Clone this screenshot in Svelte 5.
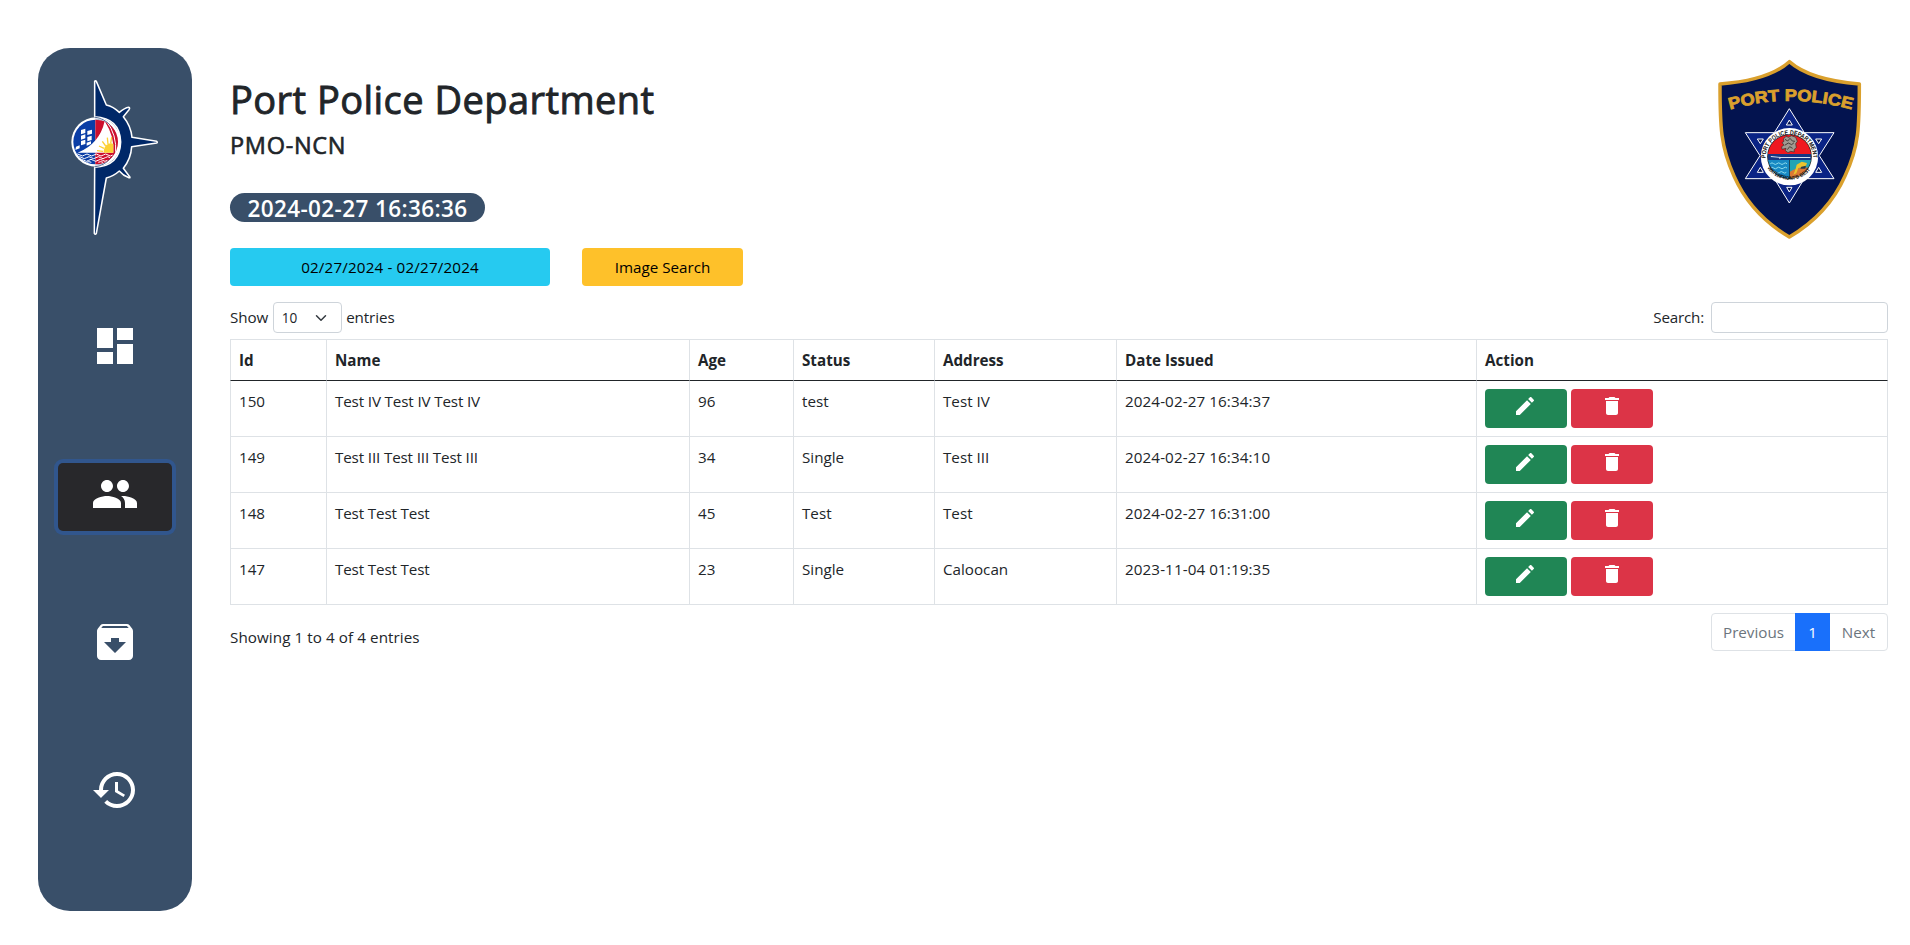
<script>
  const navItems = [
    { name: 'Dashboard', d: 'M3 13h8V3H3v10zm0 8h8v-6H3v6zm10 0h8V11h-8v10zm0-18v6h8V3h-8z' },
    {
      name: 'People',
      active: true,
      d: 'M16 11c1.66 0 2.99-1.34 2.99-3S17.66 5 16 5c-1.66 0-3 1.34-3 3s1.34 3 3 3zm-8 0c1.66 0 2.99-1.34 2.99-3S9.66 5 8 5C6.34 5 5 6.34 5 8s1.34 3 3 3zm0 2c-2.33 0-7 1.17-7 3.5V19h14v-2.500c0-2.330-4.670-3.500-7-3.500zm8 0c-.29 0-.62.02-.97.05 1.160.840 1.970 1.970 1.970 3.450V19h6v-2.500c0-2.330-4.670-3.500-7-3.500z'
    },
    {
      name: 'Archive',
      d: 'M20.540 5.230l-1.390-1.680C18.880 3.210 18.470 3 18 3H6c-.47 0-.88.21-1.160.550L3.460 5.230C3.170 5.570 3 6.020 3 6.500V19c0 1.100.9 2 2 2h14c1.100 0 2-.9 2-2V6.500c0-.48-.17-.93-.46-1.270zM12 17.500L6.500 12H10v-2h4v2h3.500L12 17.500zM5.120 5l.81-1h12l.94 1H5.120z'
    },
    {
      name: 'History',
      d: 'M13 3c-4.970 0-9 4.030-9 9H1l3.890 3.890.070.140L9 12H6c0-3.870 3.130-7 7-7s7 3.130 7 7-3.130 7-7 7c-1.930 0-3.680-.79-4.940-2.060l-1.420 1.420C8.270 19.990 10.510 21 13 21c4.970 0 9-4.030 9-9s-4.030-9-9-9zm-1 5v5l4.280 2.540.720-1.210-3.500-2.080V8H12z'
    }
  ];

  const columns = ['Id', 'Name', 'Age', 'Status', 'Address', 'Date Issued', 'Action'];

  const rows = [
    ['150', 'Test IV Test IV Test IV', '96', 'test', 'Test IV', '2024-02-27 16:34:37'],
    ['149', 'Test III Test III Test III', '34', 'Single', 'Test III', '2024-02-27 16:34:10'],
    ['148', 'Test Test Test', '45', 'Test', 'Test', '2024-02-27 16:31:00'],
    ['147', 'Test Test Test', '23', 'Single', 'Caloocan', '2023-11-04 01:19:35']
  ];
</script>

<div class="page">
  <aside class="sidebar">
    <svg class="logo" viewBox="24 24 462 600" aria-hidden="true">
      <defs>
        <clipPath id="disc"><circle cx="197" cy="306" r="67" /></clipPath>
      </defs>
      <path
        d="M194 124Q196 120 199 124L229 195Q250 200 268 217Q284 204 296 202Q301 203 297 209L280 230Q303 258 306 292L380 304Q384 306.500 380 309L305 320Q303 356 280 385L299 410Q302 416 294 412Q280 407 268 393Q250 409 229 414L199 580Q196 585 193 580L194 382Q270 378 272 306Q270 234 194 230Z"
        fill="#002868"
        stroke="#fff"
        stroke-width="4.600"
        stroke-linejoin="round"
      />
      <circle cx="198" cy="306" r="74" fill="#fff" />
      <path d="M194 231.500A75 75 0 0 1 194 380.500" fill="none" stroke="#002868" stroke-width="2" />
      <path d="M196 237A69.500 69.500 0 0 1 196 375.500" fill="none" stroke="#5a6f9b" stroke-width="1.500" />
      <g clip-path="url(#disc)">
        <rect x="126" y="236" width="70" height="140" fill="#0a3da6" />
        <rect x="196" y="236" width="76" height="140" fill="#cd0f2d" />
        <path d="M224 243Q209 312 143 338H250Q254 290 224 243Z" fill="#fff" />
        <path d="M229 243Q261 284 257 340" fill="none" stroke="#fff" stroke-width="3" />
        <path d="M221 338Q220 319 235 311Q243 308 250 311V338Z" fill="#fcd034" />
        <path d="M219 334L201 332M222 325L207 318M227 318L217 304M234 312L232 293M242 310L245 291" stroke="#fcd034" stroke-width="4" />
        <path
          d="M153 270l13-4v13l-13 4zM172 273l14-4v12l-14 4zM153 287l13-4v12l-13 4zM172 291l13-4v13l-13 4zM153 303l13-4v13l-13 4zM170 308l13-4v8l-13 5zM138 320l11-4v9l-13 5z"
          fill="#fff"
        />
        <g fill="none" stroke="#fff" stroke-width="3">
          <path d="M136 345q7-6 14 0t14 0t14 0t14 0t14 0t14 0t14 0t14 0" />
          <path d="M142 353q7-6 14 0t14 0t14 0t14 0t14 0t14 0t14 0" />
          <path d="M148 361q7-6 14 0t14 0t14 0t14 0t14 0t14 0" />
          <path d="M170 367q7-4 14 0M205 367q7-4 14 0" />
        </g>
      </g>
    </svg>
    <nav>
      {#each navItems as item}
        <button class="nav-btn" class:active={item.active} aria-label={item.name}>
          <svg viewBox="0 0 24 24" width="48" height="48"><path d={item.d} fill="#fff" /></svg>
        </button>
      {/each}
    </nav>
  </aside>

  <main>
    <header>
      <div class="titles">
        <h1>Port Police Department</h1>
        <h2>PMO-NCN</h2>
        <div class="clock">2024-02-27 16:36:36</div>
        <div class="actions">
          <button class="btn range">02/27/2024 - 02/27/2024</button>
          <button class="btn image-search">Image Search</button>
        </div>
      </div>
      <svg class="shield" viewBox="0 0 540 600" aria-hidden="true">
        <defs>
          <path id="arc-title" d="M90 179Q268 126 456 179" />
          <path id="arc-top" d="M197 325A71.500 71.500 0 0 1 340 325" />
          <path id="arc-bottom" d="M202 354A80 80 0 0 0 335 354" />
          <clipPath id="seal"><circle cx="268.500" cy="320" r="65" /></clipPath>
        </defs>
        <path
          d="M268 35Q207 91 60 102C60 230 62 290 102 378Q153 493 268 561Q384 493 435 378C477 290 478 230 478 102Q330 90 268 35Z"
          fill="#03134f"
          stroke="#daa02d"
          stroke-width="10.500"
          stroke-linejoin="round"
        />
        <text class="shield-title"><textPath href="#arc-title" textLength="370" lengthAdjust="spacingAndGlyphs">PORT POLICE</textPath></text>
        <g fill="#0a2385" stroke="#fff" stroke-width="3">
          <path d="M268 176L313 248H402L358 317L402 386H313L268 459L223 386H136L180 317L136 248H223Z" />
          <path
            d="M268 210l9 15h-18zM268 426l8-14h-16zM172 267h18l-9 14zM347 267h18l-9 14zM172 367h18l-9-15zM347 367h18l-9-15z"
            fill="#03134f"
          />
        </g>
        <circle cx="268.500" cy="320" r="86" fill="#fff" />
        <circle cx="268.500" cy="320" r="67" fill="#222" />
        <g clip-path="url(#seal)">
          <rect x="200" y="250" width="138" height="64" fill="#f01820" />
          <rect x="200" y="312" width="138" height="18" fill="#173583" />
          <path d="M213 318l30 3h88v3h-88l-5 4v-5l-26-2z" fill="#dce3f2" />
          <rect x="200" y="330" width="68" height="58" fill="#1789c3" />
          <rect x="270" y="330" width="68" height="58" fill="#21a4b4" />
          <path d="M270 365q20-16 64-12v35h-64z" fill="#d97835" />
          <path d="M290 344l15-9 16 4-4 12-22 3-6 16-9 4 7-18z" fill="#eac42e" />
          <path d="M304 350l14-3-2 9h-15z" fill="#283a48" />
          <path
            d="M211 341q5-5 10 0t10 0t10 0t10 0t10 0M211 354q5-5 10 0t10 0t10 0t10 0t10 0M219 367q5-5 10 0t10 0t10 0t10 0"
            fill="none"
            stroke="#8cdaeb"
            stroke-width="3"
          />
          <path
            d="M250 267l8-8 8 3 8-5 13 5 5 12-5 7 2 12-7 6 1 7-11-2-8 4-8-6 2-7-12 3-1-8 7-5-6-7 6-4z"
            fill="#a29a91"
            stroke="#37312e"
            stroke-width="2"
          />
          <path d="M255 268l8 5 7-8 7 8 8 1M254 286l11-7 10 5 7-6M262 299l7-9 9 5" fill="none" stroke="#322d2a" stroke-width="2.500" />
        </g>
        <text class="seal-text"><textPath href="#arc-top" textLength="223" lengthAdjust="spacingAndGlyphs">PORT POLICE DEPARTMENT</textPath></text>
        <text class="seal-text small"><textPath href="#arc-bottom" textLength="150" lengthAdjust="spacingAndGlyphs">WATERFRONT'S BEST</textPath></text>
      </svg>
    </header>

    <div class="controls">
      <label class="length">
        Show
        <span class="select">
          10
          <svg viewBox="0 0 16 16" width="12" height="12"><path d="m2 5 6 6 6-6" fill="none" stroke="#343a40" stroke-width="2" stroke-linecap="round" stroke-linejoin="round" /></svg>
        </span>
        entries
      </label>
      <label class="search">Search: <input type="text" /></label>
    </div>

    <table>
      <colgroup>
        <col class="c-id" /><col class="c-name" /><col class="c-age" /><col class="c-status" /><col class="c-address" /><col class="c-date" /><col />
      </colgroup>
      <thead>
        <tr>{#each columns as column}<th>{column}</th>{/each}</tr>
      </thead>
      <tbody>
        {#each rows as row}
          <tr>
            {#each row as cell}<td>{cell}</td>{/each}
            <td>
              <div class="row-actions">
                <button class="icon-btn edit" aria-label="Edit">
                  <svg viewBox="0 0 24 24" width="24" height="24"><path fill="#fff" d="M3 17.250V21h3.750L17.810 9.940l-3.750-3.750L3 17.250zM20.710 7.040c.39-.39.39-1.020 0-1.410l-2.340-2.340c-.39-.39-1.020-.39-1.410 0l-1.830 1.830 3.750 3.750 1.830-1.830z" /></svg>
                </button>
                <button class="icon-btn delete" aria-label="Delete">
                  <svg viewBox="0 0 24 24" width="24" height="24"><path fill="#fff" d="M6 19c0 1.100.9 2 2 2h8c1.100 0 2-.9 2-2V7H6v12zM19 4h-3.500l-1-1h-5l-1 1H5v2h14V4z" /></svg>
                </button>
              </div>
            </td>
          </tr>
        {/each}
      </tbody>
    </table>

    <footer>
      <div class="info">Showing 1 to 4 of 4 entries</div>
      <div class="pagination">
        <span class="prev">Previous</span>
        <span class="current">1</span>
        <span class="next">Next</span>
      </div>
    </footer>
  </main>
</div>

<style>
  :global(body) {
    margin: 0;
    background: #fff;
  }

  .page,
  .page * {
    box-sizing: border-box;
  }

  .page {
    display: flex;
    align-items: flex-start;
    gap: 38px;
    height: 945px;
    padding: 48px 22px 0 38px;
    overflow: hidden;
    font: 15.2px/24px 'Open Sans', 'Noto Sans', sans-serif;
    color: #212529;
  }

  button {
    border: 0;
    padding: 0;
    font: inherit;
  }

  .sidebar {
    flex: none;
    display: flex;
    flex-direction: column;
    width: 154px;
    height: 863px;
    border-radius: 32px;
    background: #394f69;
  }

  .logo {
    display: block;
    width: 154px;
    height: 200px;
  }

  nav {
    display: flex;
    flex-direction: column;
    align-items: center;
    gap: 80px;
    padding-top: 67px;
  }

  .nav-btn {
    display: flex;
    justify-content: center;
    width: 114px;
    height: 68px;
    padding-top: 7px;
    border-radius: 5px;
    background: transparent;
  }

  .nav-btn.active {
    background: #28282b;
    box-shadow: 0 0 0 4px #31568d;
  }

  main {
    flex: none;
    width: 1658px;
  }

  header {
    display: flex;
    justify-content: space-between;
    height: 254px;
  }

  .titles {
    padding-top: 27px;
  }

  h1 {
    margin: 0 0 8px;
    font-size: 38px;
    line-height: 48px;
    font-weight: 400;
    letter-spacing: 0.45px;
    -webkit-text-stroke: 0.9px #212529;
  }

  h2 {
    margin: 0;
    font-size: 23.500px;
    line-height: 29px;
    font-weight: 400;
    letter-spacing: 0.7px;
    -webkit-text-stroke: 0.6px #212529;
  }

  .clock {
    width: 255px;
    height: 29px;
    margin-top: 33px;
    border-radius: 14.5px;
    background: #394f69;
    color: #fff;
    text-align: center;
    font-size: 22.500px;
    line-height: 31px;
    font-weight: 600;
    letter-spacing: 0.38px;
    white-space: nowrap;
  }

  .actions {
    display: flex;
    gap: 32px;
    margin-top: 26px;
  }

  .btn {
    height: 38px;
    border-radius: 4px;
    color: #000;
  }

  .range {
    width: 320px;
    background: #26caf0;
    letter-spacing: 0.16px;
  }

  .image-search {
    width: 161px;
    background: #fec12a;
  }

  .shield {
    width: 180px;
    height: 200px;
    margin: 2px 8px 0 0;
  }

  .shield-title {
    font: bold 49px 'Liberation Sans', sans-serif;
    fill: #daa02d;
    stroke: #daa02d;
    stroke-width: 2.4;
  }

  .seal-text {
    font: bold 19px 'Liberation Sans', sans-serif;
    fill: #111;
  }

  .seal-text.small {
    font-size: 16px;
  }

  .controls {
    display: flex;
    justify-content: space-between;
    height: 37px;
  }

  .length,
  .search {
    display: flex;
    align-items: flex-start;
    height: 31px;
    line-height: 31px;
    letter-spacing: -0.1px;
  }

  .length {
    gap: 4.500px;
  }

  .select {
    display: flex;
    align-items: center;
    justify-content: space-between;
    width: 69px;
    height: 31px;
    padding: 0 14px 0 8px;
    border: 1px solid #ced4da;
    border-radius: 4px;
    font-size: 13.600px;
    line-height: 29px;
    letter-spacing: 0;
  }

  .search {
    gap: 7px;
    letter-spacing: -0.2px;
  }

  input {
    width: 177px;
    height: 31px;
    border: 1px solid #ced4da;
    border-radius: 4px;
    background: #fff;
  }

  table {
    width: 1658px;
    table-layout: fixed;
    border-collapse: separate;
    border-spacing: 0;
    border-top: 1px solid #dee2e6;
  }

  .c-id { width: 97px; }
  .c-name { width: 363px; }
  .c-age { width: 104px; }
  .c-status { width: 141px; }
  .c-address { width: 182px; }
  .c-date { width: 360px; }

  th,
  td {
    padding: 8px;
    border: solid #dee2e6;
    border-width: 0 1px 1px 0;
    text-align: left;
    vertical-align: top;
  }

  th:first-child,
  td:first-child {
    border-left-width: 1px;
  }

  th {
    height: 41px;
    border-bottom-color: #212529;
    font-weight: 700;
  }

  td {
    height: 56px;
  }

  td:nth-child(2) {
    letter-spacing: -0.14px;
  }

  td:nth-child(6) {
    letter-spacing: 0.1px;
  }

  .row-actions {
    display: flex;
    gap: 4px;
  }

  .icon-btn {
    display: flex;
    justify-content: center;
    width: 82px;
    height: 39px;
    padding-top: 5px;
    border-radius: 4px;
  }

  .edit {
    padding-right: 2px;
    background: #208655;
  }

  .delete {
    background: #dc3447;
  }

  footer {
    display: flex;
    justify-content: space-between;
    margin-top: 8px;
  }

  .info {
    padding-top: 12px;
    letter-spacing: 0.08px;
  }

  .pagination {
    display: flex;
    width: 177px;
    height: 38px;
    border: 1px solid #dee2e6;
    border-radius: 4px;
    line-height: 36px;
    text-align: center;
    color: #6c757d;
  }

  .prev {
    width: 83px;
  }

  .current {
    width: 35px;
    margin: -1px 0;
    line-height: 38px;
    background: #1970fb;
    color: #fff;
  }

  .next {
    width: 57px;
  }
</style>
